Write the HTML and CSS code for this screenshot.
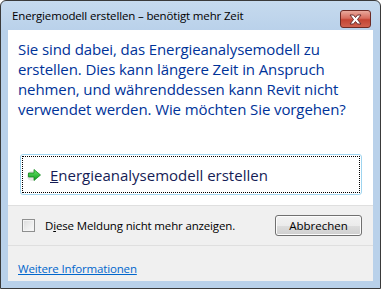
FILE: index.html
```html
<!DOCTYPE html>
<html>
<head>
<meta charset="utf-8">
<link rel="stylesheet" href="styles.css">
</head>
<body>
<div class="window">
  <div class="titlebar">
    <span class="title">Energiemodell erstellen – benötigt mehr Zeit</span>
    <span class="close">
      <svg width="17" height="11" viewBox="0 0 17 11">
        <path d="M3 1 L6.5 1 L8.5 3.5 L10.5 1 L14 1 L10.5 5.5 L14 10 L10.5 10 L8.5 7.5 L6.5 10 L3 10 L6.5 5.5 Z" fill="#fff" stroke="#6b2f2f" stroke-width="1" stroke-linejoin="round"/>
      </svg>
    </span>
  </div>
  <div class="client">
    <div class="content">
      <p class="instruction">Sie sind dabei, das Energieanalysemodell zu erstellen. Dies kann längere Zeit in Anspruch nehmen, und währenddessen kann Revit nicht verwendet werden. Wie möchten Sie vorgehen?</p>
      <div class="cmdlink">
        <div class="focus">
          <svg class="arrow" width="16" height="14" viewBox="0 0 16 14">
            <defs>
              <linearGradient id="g" x1="0" y1="0" x2="0" y2="1">
                <stop offset="0" stop-color="#6be86b"/>
                <stop offset="1" stop-color="#0c9a1c"/>
              </linearGradient>
            </defs>
            <ellipse cx="5" cy="8" rx="5" ry="5" fill="#000" opacity="0.1"/>
            <path d="M1.5 5 H7 V1.5 L13.5 7 L7 12.5 V9 H1.5 Z" fill="url(#g)" stroke="#13881d" stroke-width="0.8" stroke-linejoin="round"/>
          </svg>
          <span class="cmdtext"><u>E</u>nergieanalysemodell erstellen</span>
        </div>
      </div>
    </div>
    <div class="footer">
      <div class="footrow">
        <label class="check"><span class="box"></span><span>D<u>i</u>ese Meldung nicht mehr anzeigen.</span></label>
        <span class="btn">Abbrechen</span>
      </div>
      <div class="expand">
        <a class="link">Weitere Informationen</a>
      </div>
    </div>
  </div>
</div>
</body>
</html>
```
FILE: styles.css
```css
html, body {
  margin: 0;
  padding: 0;
  width: 381px;
  height: 289px;
  overflow: hidden;
  background: #fff;
}
.window {
  box-sizing: border-box;
  width: 381px;
  height: 289px;
  border: 1px solid #3a3a3a;
  border-radius: 6px 6px 0 0;
  background: linear-gradient(#c6daee, #b9d1ea 30px);
  padding: 0 7px 7px 7px;
  display: flex;
  flex-direction: column;
  font-family: "Open Sans", "Noto Sans", sans-serif;
}
.titlebar {
  height: 29px;
  display: flex;
  align-items: flex-start;
  justify-content: space-between;
}
.title {
  margin: 7px 0 0 4px;
  font-size: 11.5px;
  color: #000;
  letter-spacing: -0.15px;
}
.close {
  margin: 9px 2px 0 0;
  width: 29px;
  height: 16px;
  border: 1px solid #6e2b25;
  border-radius: 3px;
  background: linear-gradient(#e9a99c, #d86d5e 45%, #c44433 55%, #d0614f);
  display: flex;
  align-items: center;
  justify-content: center;
}
.client {
  flex: 1;
  display: flex;
  flex-direction: column;
  background: #fff;
}
.content {
  height: 175px;
  box-sizing: border-box;
  padding: 9px 0 0 10px;
}
.instruction {
  margin: 0;
  font-size: 15px;
  line-height: 20px;
  color: #003399;
  width: 345px;
  letter-spacing: -0.1px;
}
.cmdlink {
  margin: 35px 0 0 2px;
  width: 342px;
  height: 41px;
  box-sizing: border-box;
  border: 1px solid #9fd5f0;
  border-radius: 3px;
  padding: 1px;
}
.focus {
  height: 100%;
  box-sizing: border-box;
  border: 1px dotted #000;
  display: flex;
  align-items: center;
  padding-left: 4px;
}
.arrow {
  margin-right: 7px;
}
.cmdtext {
  font-size: 15px;
  color: #151c55;
}
.footer {
  flex: 1;
  background: #f0f0f0;
  border-top: 1px solid #dfdfdf;
  display: flex;
  flex-direction: column;
}
.footrow {
  height: 40px;
  box-sizing: border-box;
  border-bottom: 1px solid #dfdfdf;
  display: flex;
  align-items: center;
  justify-content: space-between;
  padding: 0 11px 0 14px;
}
.check {
  display: flex;
  align-items: center;
  font-size: 11.5px;
  letter-spacing: -0.15px;
  color: #000;
}
.box {
  width: 11px;
  height: 11px;
  border: 1px solid #8e8f8f;
  background: linear-gradient(135deg, #dcdcdc, #fbfbfb);
  box-shadow: inset 0 0 0 1px #f4f4f4;
  margin-right: 10px;
}
.btn {
  width: 85px;
  height: 19px;
  border: 1px solid #707070;
  border-radius: 3px;
  background: linear-gradient(#f2f2f2, #ebebeb 50%, #dddddd 50%, #cfcfcf);
  font-size: 11.5px;
  display: flex;
  align-items: center;
  justify-content: center;
  color: #000;
  box-shadow: inset 0 0 0 1px #fcfcfc;
}
.expand {
  flex: 1;
  padding: 10px 0 0 10px;
}
.link {
  font-size: 11.5px;
  letter-spacing: -0.15px;
  color: #0066cc;
  text-decoration: underline;
}
```
